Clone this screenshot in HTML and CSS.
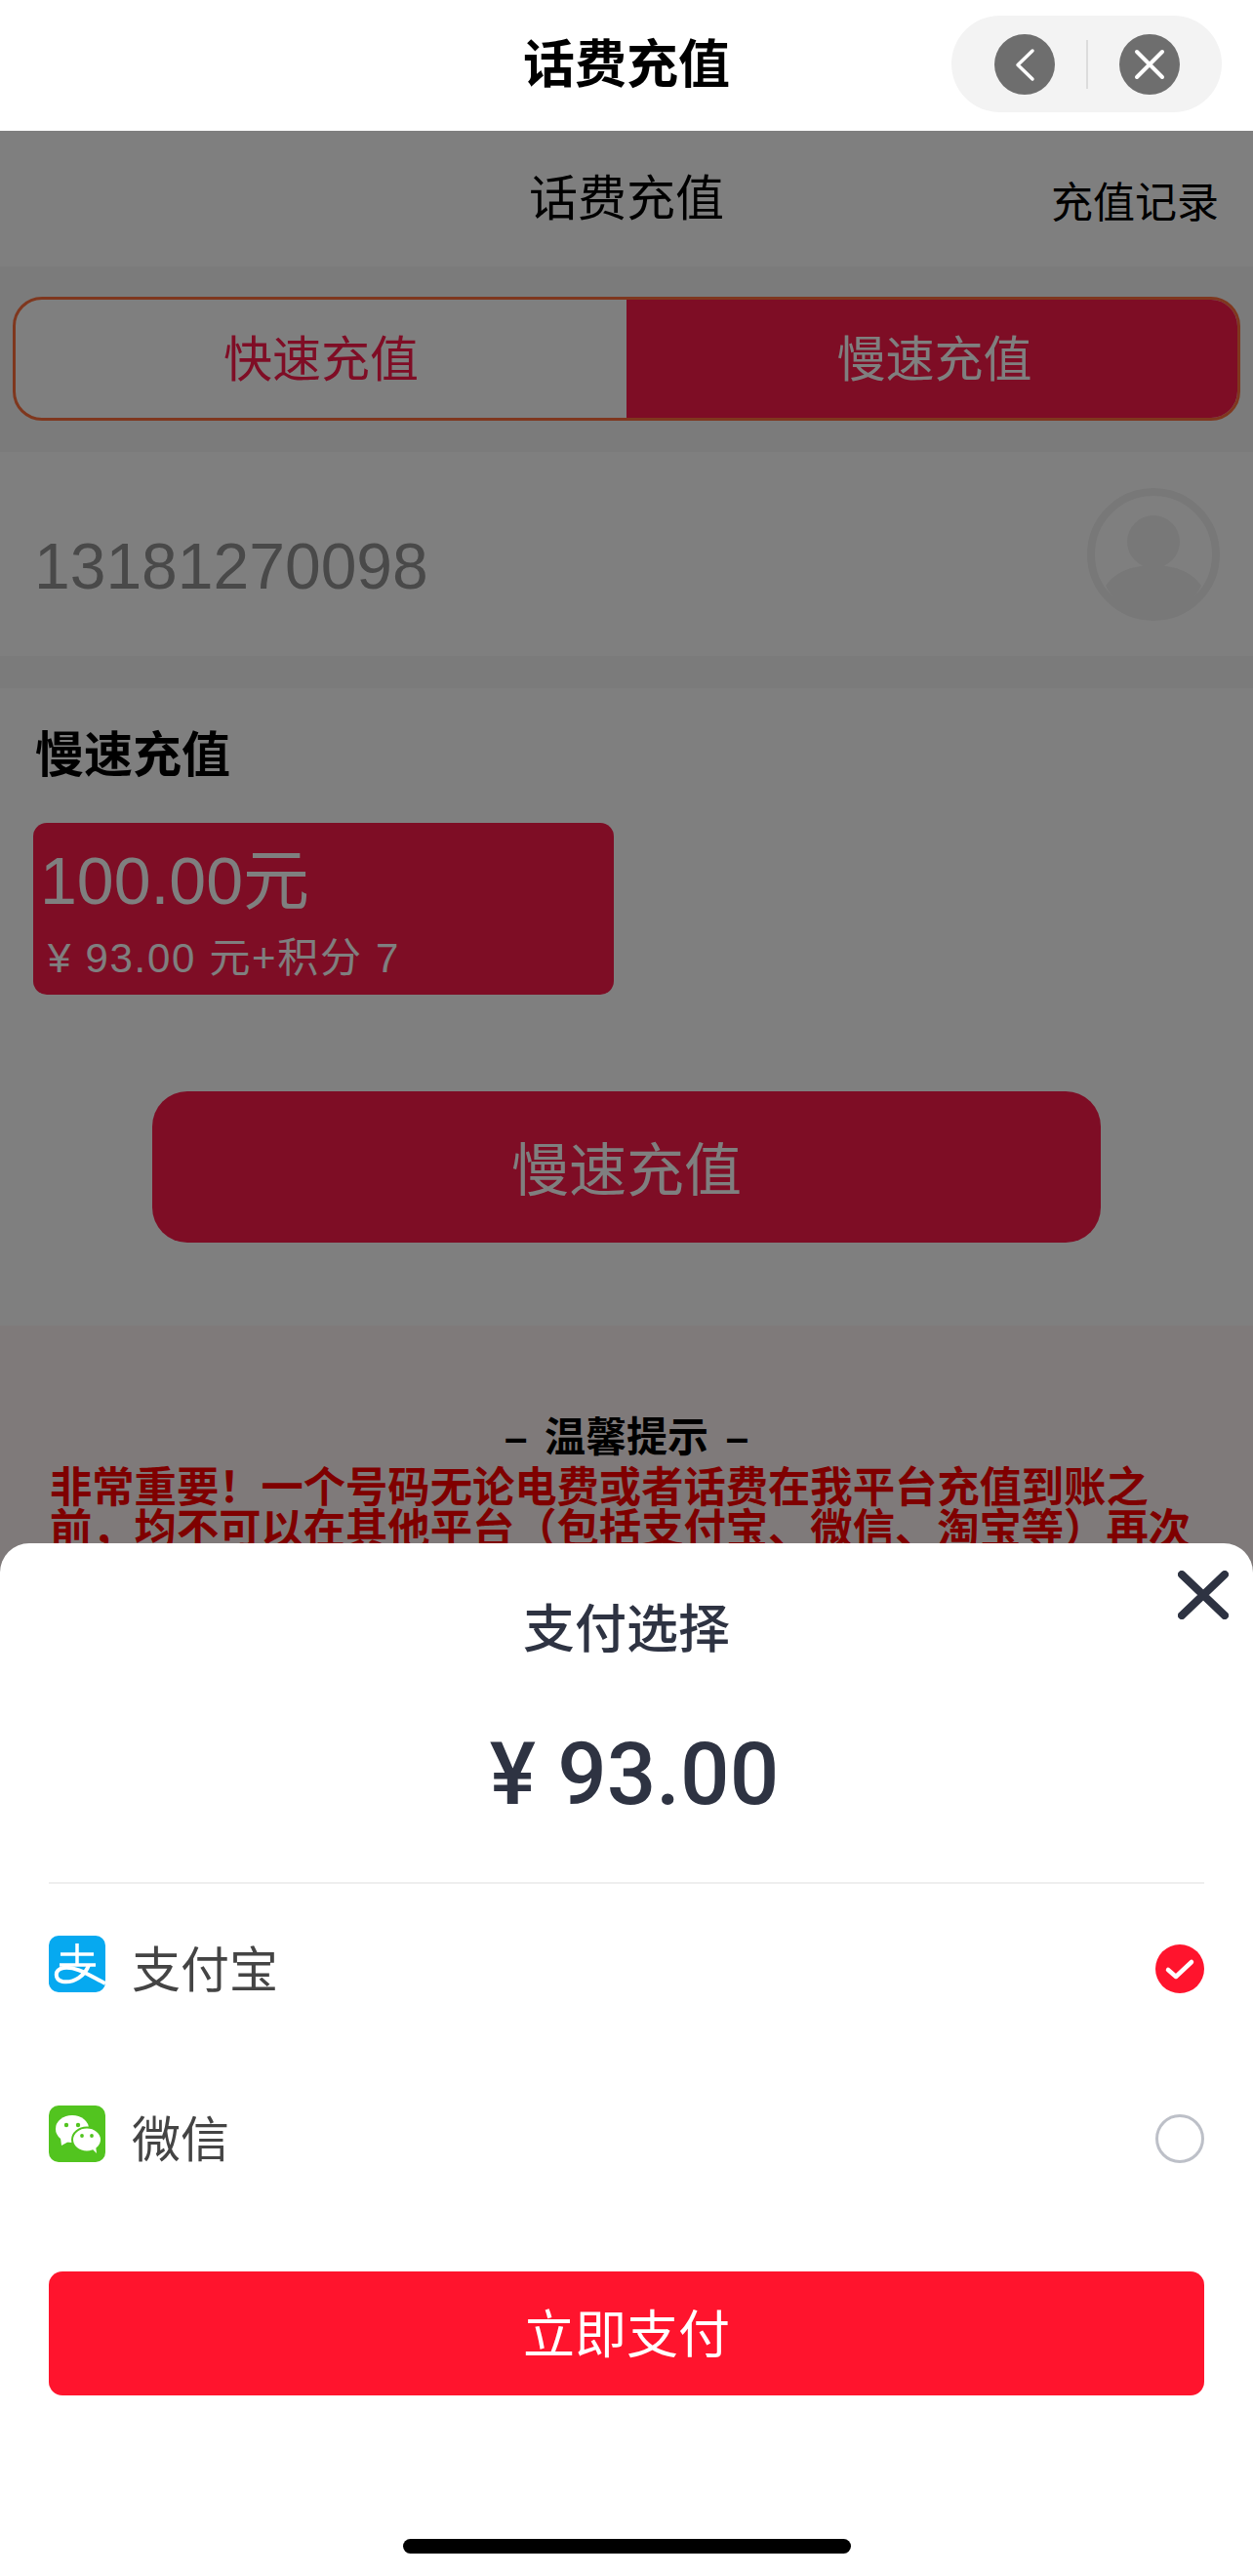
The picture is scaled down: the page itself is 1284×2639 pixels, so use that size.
FILE: index.html
```html
<!DOCTYPE html>
<html lang="zh-CN">
<head>
    <meta charset="UTF-8">
    <meta name="viewport" content="width=device-width, initial-scale=1.0">
    <title>话费充值</title>
    <link rel="stylesheet" href="styles.css">
</head>
<body>
    <div class="screen">
        <header class="navbar">
            <h1 class="navbar-title">话费充值</h1>
            <div class="capsule">
                <span class="capsule-btn">
                    <svg viewBox="0 0 62 62" width="62" height="62"><path d="M39 17 L24 31.500 L39 46" fill="none" stroke="#fff" stroke-width="3.500" stroke-linecap="round" stroke-linejoin="round"/></svg>
                </span>
                <span class="capsule-line"></span>
                <span class="capsule-btn">
                    <svg viewBox="0 0 62 62" width="62" height="62"><path d="M18 18 L44 44 M44 18 L18 44" fill="none" stroke="#fff" stroke-width="4" stroke-linecap="round"/></svg>
                </span>
            </div>
        </header>

        <main class="page">
            <div class="page-header">
                <span></span>
                <h2 class="page-title">话费充值</h2>
                <a class="records-link">充值记录</a>
            </div>

            <div class="tabs-wrap">
                <div class="tabs">
                    <div class="tab">快速充值</div>
                    <div class="tab tab-active">慢速充值</div>
                </div>
            </div>

            <div class="phone-row">
                <span class="phone-number">13181270098</span>
                <svg class="avatar" viewBox="0 0 136 136" width="136" height="136">
                    <circle cx="68" cy="68" r="64" fill="none" stroke="#f0f0f0" stroke-width="8"/>
                    <circle cx="68" cy="55" r="27" fill="#f0f0f0"/>
                    <path d="M19 100 C30 84 50 79 68 79 C86 79 106 84 117 100 C105 123 88 132 68 132 C48 132 31 123 19 100 Z" fill="#f0f0f0"/>
                </svg>
            </div>

            <section class="slow-section">
                <h3 class="section-title">慢速充值</h3>
                <div class="price-card">
                    <div class="price-amount">100.00元</div>
                    <div class="price-detail">¥ 93.00 元+积分 7</div>
                </div>
                <button class="charge-btn">慢速充值</button>
            </section>

            <section class="notice">
                <h4 class="notice-title">– 温馨提示 –</h4>
                <p class="notice-text">非常重要&#xFF01;一个号码无论电费或者话费在我平台充值到账之前&#xFF0C;均不可以在其他平台&#xFF08;包括支付宝、微信、淘宝等&#xFF09;再次</p>
            </section>

            <div class="mask"></div>
        </main>

        <div class="sheet">
            <svg class="sheet-close" viewBox="0 0 52 50" width="52" height="50"><path d="M4 4 L48 46 M48 4 L4 46" fill="none" stroke="#2e3342" stroke-width="8" stroke-linecap="round"/></svg>
            <h3 class="sheet-title">支付选择</h3>
            <div class="sheet-amount">¥ 93.00</div>

            <div class="pay-row">
                <svg class="pay-icon" viewBox="0 0 58 58" width="58" height="58">
                    <rect width="58" height="58" rx="10" fill="#06a9f0"/>
                    <path d="M12 19 H46 M29 8 V30 M11 30 H48" fill="none" stroke="#fff" stroke-width="3.500"/>
                    <path d="M41 30 C37 41 26 49 14 47 C6 45 5 35 15 33 C28 31 42 41 58 49" fill="none" stroke="#fff" stroke-width="4"/>
                </svg>
                <span class="pay-name">支付宝</span>
                <svg class="pay-radio" viewBox="0 0 50 50" width="50" height="50">
                    <circle cx="25" cy="25" r="25" fill="#ff142d"/>
                    <path d="M13 26 L21 33 L37 18" fill="none" stroke="#fff" stroke-width="4.500" stroke-linecap="round" stroke-linejoin="round"/>
                </svg>
            </div>

            <div class="pay-row">
                <svg class="pay-icon" viewBox="0 0 58 58" width="58" height="58">
                    <rect width="58" height="58" rx="10" fill="#52c41f"/>
                    <ellipse cx="24" cy="24" rx="17" ry="14" fill="#fff"/>
                    <path d="M12 33 L13 41 L22 36 Z" fill="#fff"/>
                    <ellipse cx="39" cy="35" rx="15" ry="12.500" fill="#fff" stroke="#52c41f" stroke-width="2"/>
                    <path d="M44 44 L49 49 L48 41 Z" fill="#fff"/>
                    <circle cx="18" cy="20" r="2.200" fill="#52c41f"/>
                    <circle cx="30" cy="20" r="2.200" fill="#52c41f"/>
                    <circle cx="34" cy="31" r="1.900" fill="#52c41f"/>
                    <circle cx="44" cy="31" r="1.900" fill="#52c41f"/>
                </svg>
                <span class="pay-name">微信</span>
                <span class="pay-radio pay-radio-off"></span>
            </div>

            <button class="pay-btn">立即支付</button>
            <div class="home-bar"></div>
        </div>
    </div>
</body>
</html>
```
FILE: styles.css
```css
* {
    margin: 0;
    padding: 0;
    box-sizing: border-box;
}

body {
    font-family: "Liberation Sans", "Noto Sans CJK SC", sans-serif;
    background: #fff;
    color: #000;
}

.screen {
    position: relative;
    width: 1284px;
    height: 2639px;
    overflow: hidden;
}

/* top bar */
.navbar {
    height: 134px;
    padding: 0 32px 3px 0;
    display: flex;
    align-items: center;
    justify-content: flex-end;
    position: relative;
    background: #fff;
}

.navbar-title {
    position: absolute;
    left: 0;
    right: 0;
    top: 32px;
    line-height: 70px;
    text-align: center;
    font-size: 53px;
    font-weight: 700;
}

.capsule {
    width: 277px;
    height: 99px;
    border-radius: 50px;
    background: #f3f3f3;
    display: flex;
    align-items: center;
    justify-content: center;
    gap: 32px;
}

.capsule-btn {
    width: 62px;
    height: 62px;
    border-radius: 50%;
    background: #6e6e6e;
    display: block;
}

.capsule-btn svg {
    display: block;
}

.capsule-line {
    width: 2px;
    height: 50px;
    background: #dcdcdc;
}

/* dimmed page behind the sheet */
.page {
    position: relative;
    height: 2505px;
    overflow: hidden;
    background: #f6f6f6;
}

.mask {
    position: absolute;
    inset: 0;
    background: rgba(0, 0, 0, 0.5);
}

.page-header {
    height: 139px;
    padding: 0 35px;
    display: grid;
    grid-template-columns: 1fr auto 1fr;
    background: #fff;
}

.page-title {
    font-size: 50px;
    font-weight: 400;
    line-height: 60px;
    padding-top: 40px;
}

.records-link {
    justify-self: end;
    font-size: 43px;
    line-height: 60px;
    padding-top: 44px;
    white-space: nowrap;
}

.tabs-wrap {
    height: 190px;
    padding: 31px 13px 32px;
    background: #f6f6f6;
}

.tabs {
    height: 127px;
    display: flex;
    border: 3px solid #ff6f3c;
    border-radius: 30px;
    overflow: hidden;
    background: #fff;
}

.tab {
    flex: 0 0 50%;
    display: flex;
    align-items: center;
    justify-content: center;
    padding-bottom: 7px;
    font-size: 50px;
    color: #ff1a4b;
}

.tab-active {
    padding-left: 5px;
    background: #fc1a4a;
    color: #fff;
}

.phone-row {
    height: 209px;
    padding: 0 34px 0 35px;
    display: flex;
    align-items: center;
    justify-content: space-between;
    background: #fff;
}

.phone-number {
    padding-top: 24px;
    font-size: 66px;
    color: #929292;
}

.slow-section {
    margin-top: 33px;
    height: 653px;
    padding-top: 39px;
    background: #fff;
}

.section-title {
    font-size: 50px;
    font-weight: 700;
    line-height: 60px;
    margin-left: 36px;
}

.price-card {
    width: 595px;
    height: 176px;
    margin: 39px 0 0 34px;
    padding: 19px 0 0 7px;
    border-radius: 14px;
    background: #fc1a4a;
    color: #fff;
}

.price-amount {
    font-size: 68px;
    line-height: 80px;
}

.price-detail {
    font-size: 42px;
    line-height: 60px;
    letter-spacing: 1.700px;
    margin: 10px 0 0 8px;
}

.charge-btn {
    display: block;
    width: 972px;
    height: 155px;
    margin: 99px auto 0;
    padding-bottom: 3px;
    border: none;
    border-radius: 36px;
    background: #fc1a4a;
    color: #fff;
    font-family: inherit;
    font-size: 59px;
}

.notice {
    background: #fff4f4;
    padding-top: 90px;
    height: 400px;
}

.notice-title {
    font-size: 42px;
    font-weight: 700;
    line-height: 50px;
    word-spacing: 6px;
    text-align: center;
}

.notice-text {
    font-size: 43.300px;
    font-weight: 700;
    line-height: 43px;
    color: #ff0000;
    margin-top: 5px;
    padding: 0 60px 0 51px;
}

/* payment sheet */
.sheet {
    position: absolute;
    left: 0;
    right: 0;
    top: 1581px;
    bottom: 0;
    padding: 54px 50px 0;
    border-radius: 30px 30px 0 0;
    background: #fff;
    color: #2e3342;
}

.sheet-close {
    position: absolute;
    top: 28px;
    right: 25px;
}

.sheet-title {
    font-size: 53px;
    font-weight: 500;
    line-height: 70px;
    text-align: center;
}

.sheet-amount {
    margin-top: 63px;
    height: 162px;
    padding-left: 16px;
    border-bottom: 2px solid #eeeeee;
    font-family: Roboto, "Liberation Sans", sans-serif;
    font-size: 89px;
    font-weight: 500;
    line-height: 100px;
    text-align: center;
}

.pay-row {
    height: 174px;
    display: flex;
    align-items: center;
}

.pay-icon {
    display: block;
    margin-bottom: 10px;
}

.pay-name {
    flex: 1;
    margin-left: 27px;
    padding-bottom: 7px;
    font-size: 50px;
    color: #444;
}

.pay-radio {
    display: block;
    width: 50px;
    height: 50px;
    flex: none;
}

.pay-radio-off {
    border: 3px solid #bdc0c8;
    border-radius: 50%;
}

.pay-btn {
    display: block;
    width: 100%;
    height: 127px;
    margin-top: 49px;
    padding-bottom: 6px;
    border: none;
    border-radius: 14px;
    background: #ff142d;
    color: #fff;
    font-family: inherit;
    font-size: 53px;
}

.home-bar {
    width: 459px;
    height: 15px;
    margin: 147px auto 0;
    border-radius: 8px;
    background: #000;
}
```
